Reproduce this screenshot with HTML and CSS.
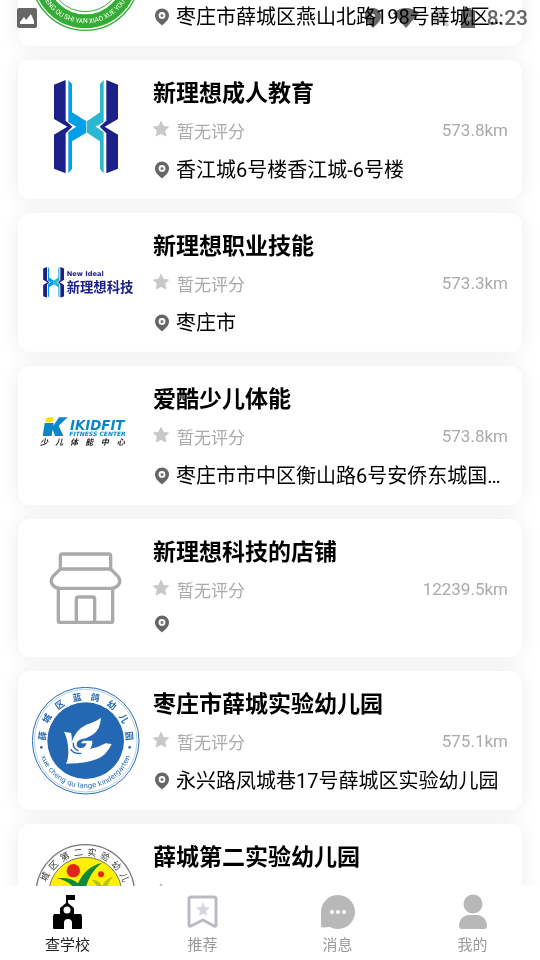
FILE: index.html
```html
<!DOCTYPE html>
<html lang="zh">
<head>
  <meta charset="utf-8">
  <meta name="viewport" content="width=device-width, initial-scale=1">
  <title>查学校</title>
  <link rel="stylesheet" href="styles.css">
</head>
<body>
  <svg class="sprite" aria-hidden="true">
    <symbol id="pin" viewBox="0 0 14 17">
      <path fill="#666" fill-rule="evenodd" d="M7 0a7 7 0 0 1 7 7c0 4-3.500 7-7 10C3.500 14 0 11 0 7a7 7 0 0 1 7-7zm0 3.500a3.400 3.400 0 1 0 0 6.800 3.400 3.400 0 0 0 0-6.800z"/>
      <circle cx="7" cy="6.900" r="1.500" fill="#777"/>
    </symbol>
    <symbol id="star" viewBox="0 0 16 16">
      <path fill="#c8c8c8" stroke="#c8c8c8" stroke-linejoin="round" d="M8 .5l2.300 4.800 5.200.7-3.800 3.600 1 5.300L8 12.400l-4.700 2.500 1-5.300L.5 6l5.200-.7z"/>
    </symbol>
    <symbol id="ideal" viewBox="108 58 192 280">
      <path fill="#1d2088" d="M108 72l35-14v122l20 18-20 20v120l-35-14V222l40-24-40-23zM300 72l-35-14v122l-20 18 20 20v120l35-14V222l-40-24 40-23z"/>
      <path fill="#00a0e9" d="M151 58l11 12v85l43 27v34l-43 26v83l-11 13V214l24-16-24-14z"/>
      <path fill="#2ab7cf" d="M257 58l-11 12v85l-39 27v34l39 26v83l11 13V214l-24-16 24-14z"/>
    </symbol>
  </svg>

  <div class="app">
    <div class="status">
      <svg class="status-photo" viewBox="0 0 20 20"><rect width="20" height="20" rx="2" fill="#666"/><path fill="#fff" d="M3 16v-2l4-5 2 3 5-6 3 7v3z"/></svg>
      <span class="status-right">
        <svg width="16" height="22" viewBox="0 0 16 22"><path fill="#666" fill-rule="evenodd" d="M8 1a8 8 0 0 1 8 8c0 5-4 8-8 12C4 17 0 14 0 9a8 8 0 0 1 8-8zm0 6a2 2 0 1 0 0 4 2 2 0 0 0 0-4z"/></svg>
        <svg width="26" height="20" viewBox="0 0 26 20"><path fill="#666" d="M0 5Q13-5 26 5L13 20z"/></svg>
        <svg width="18" height="20" viewBox="0 0 18 20"><path fill="#ccc" d="M6 0h9v12l3 5-2 2-4-4H0V6z"/></svg>
        <svg width="14" height="20" viewBox="0 0 14 20"><path fill="#666" d="M0 2h4V0h6v2h4v18H0z"/><path fill="#999" d="M8 4l-5 8h4l-1 5 5-8H7z"/></svg>
        <span class="time">8:23</span>
      </span>
    </div>

    <main class="list">
      <article class="card card-cut">
        <svg class="logo" viewBox="96 -232 324 324">
          <circle cx="256" cy="-72" r="162" fill="#fff" stroke="#35ac35" stroke-width="4"/>
          <circle cx="256" cy="-72" r="135" fill="none" stroke="#35ac35" stroke-width="42"/>
          <circle cx="256" cy="-72" r="106" fill="#fff" stroke="#35ac35" stroke-width="3"/>
          <path id="green-ring" fill="none" d="M115-72a141 141 0 0 0 282 0"/>
          <text class="ring-green"><textPath href="#green-ring" startOffset="50%">CHENG QU SHI YAN XIAO XUE YOU ER</textPath></text>
        </svg>
        <div class="info">
          <p class="address"><svg class="pin"><use href="#pin"/></svg><span>枣庄市薛城区燕山北路198号薛城区…</span></p>
        </div>
      </article>

      <article class="card">
        <svg class="logo" viewBox="42 46 324 324">
          <use href="#ideal" x="108" y="58" width="192" height="280"/>
        </svg>
        <div class="info">
          <h2 class="name">新理想成人教育</h2>
          <p class="meta"><svg class="star"><use href="#star"/></svg><span>暂无评分</span><span class="distance">573.8km</span></p>
          <p class="address"><svg class="pin"><use href="#pin"/></svg><span>香江城6号楼香江城-6号楼</span></p>
        </div>
      </article>

      <article class="card">
        <svg class="logo" viewBox="42 -35 324 324">
          <use href="#ideal" x="75" y="79" width="64" height="92"/>
          <text class="ideal-en" x="146" y="107">New Ideal</text>
          <text class="ideal-cn" x="146" y="154">新理想科技</text>
        </svg>
        <div class="info">
          <h2 class="name">新理想职业技能</h2>
          <p class="meta"><svg class="star"><use href="#star"/></svg><span>暂无评分</span><span class="distance">573.3km</span></p>
          <p class="address"><svg class="pin"><use href="#pin"/></svg><span>枣庄市</span></p>
        </div>
      </article>

      <article class="card">
        <svg class="logo" viewBox="42 -24 324 324">
          <path fill="#0b86c8" d="M80 99h27l-6 39H74zM123 82h26l-27 25 14 31h-25l-9-25z"/>
          <path fill="#ffe100" d="M88 82h14q6 0 4 8-2 7-9 7H82q1-12 6-15z"/>
          <text class="kid-name" x="156" y="121">IKIDFIT</text>
          <text class="kid-sub" x="154" y="138">FITNESS CENTER</text>
          <text class="kid-cn" y="166"><tspan x="66">少</tspan><tspan x="112">儿</tspan><tspan x="156">体</tspan><tspan x="202">能</tspan><tspan x="248">中</tspan><tspan x="296">心</tspan></text>
        </svg>
        <div class="info">
          <h2 class="name">爱酷少儿体能</h2>
          <p class="meta"><svg class="star"><use href="#star"/></svg><span>暂无评分</span><span class="distance">573.8km</span></p>
          <p class="address"><svg class="pin"><use href="#pin"/></svg><span>枣庄市市中区衡山路6号安侨东城国…</span></p>
        </div>
      </article>

      <article class="card">
        <svg class="logo" viewBox="42 13 324 324">
          <g fill="none" stroke="#aaa" stroke-width="10" stroke-linejoin="round">
            <path d="M127 115V76q0-6 6-6h139q6 0 6 6v39M127 115h151l22 22q11 15 0 27-8 9-22 9H127q-14 0-22-9-11-12 0-27z"/>
            <path d="M121 173v97q0 5 5 5h153q5 0 5-5v-97M175 275v-70q0-6 6-6h43q6 0 6 6v70"/>
          </g>
        </svg>
        <div class="info">
          <h2 class="name">新理想科技的店铺</h2>
          <p class="meta"><svg class="star"><use href="#star"/></svg><span>暂无评分</span><span class="distance">12239.5km</span></p>
          <p class="address address-empty"><svg class="pin"><use href="#pin"/></svg></p>
        </div>
      </article>

      <article class="card">
        <svg class="logo" viewBox="42 46 324 324">
          <circle cx="203" cy="207" r="160" fill="#fff" stroke="#2b6cb5" stroke-width="3"/>
          <circle cx="203" cy="207" r="154" fill="none" stroke="#2b6cb5"/>
          <circle cx="203" cy="207" r="115" fill="#2468b4"/>
          <path fill="#fff" d="M138 180q12 3 21 3 4 15 2 29 12-38 44-53 32-11 44-21-2 36-25 51-15 10-34 14-12 4-14 13-1 11 10 13 15 2 20-14h-18l8-8h27q0 18-8 25 25-4 48-17l18 2q-16 35-44 45-34 14-93 14 8-16 7-39-1-34-13-57z"/>
          <path fill="none" stroke="#2468b4" stroke-width="4" d="M158 232q8 16 32 13M166 213q-2 18 16 25"/>
          <circle cx="70" cy="227" r="4" fill="#2468b4"/>
          <circle cx="335" cy="227" r="4" fill="#2468b4"/>
          <path id="blue-bottom" fill="none" d="M61 207a142 142 0 0 0 284 0"/>
          <g class="ring-blue-cn">
            <text transform="translate(74 193) rotate(-84)">薛</text>
            <text transform="translate(88 141) rotate(-59)">城</text>
            <text transform="translate(126 100) rotate(-36)">区</text>
            <text transform="translate(177 78) rotate(-11)">蓝</text>
            <text transform="translate(231 78) rotate(12)">鸽</text>
            <text transform="translate(281 101) rotate(37)">幼</text>
            <text transform="translate(317 141) rotate(60)">儿</text>
            <text transform="translate(333 193) rotate(84)">园</text>
          </g>
          <text class="ring-blue"><textPath href="#blue-bottom" startOffset="50%">xue cheng qu lange kindergarten</textPath></text>
        </svg>
        <div class="info">
          <h2 class="name">枣庄市薛城实验幼儿园</h2>
          <p class="meta"><svg class="star"><use href="#star"/></svg><span>暂无评分</span><span class="distance">575.1km</span></p>
          <p class="address"><svg class="pin"><use href="#pin"/></svg><span>永兴路凤城巷17号薛城区实验幼儿园</span></p>
        </div>
      </article>

      <article class="card">
        <svg class="logo" viewBox="42 58 324 324">
          <circle cx="202" cy="220" r="148" fill="#fff" stroke="#777" stroke-width="4"/>
          <circle cx="202" cy="220" r="110" fill="#fff100" stroke="#777" stroke-width="3"/>
          <circle cx="166" cy="150" r="20" fill="#e1251b"/>
          <circle cx="249" cy="161" r="9" fill="#e1251b"/>
          <path fill="#b5c51c" d="M222 177q24 1 30 20 12-26 33-29-21 22-25 60h-18q2-29-20-51z"/>
          <path fill="#0b8a37" d="M116 173q42-5 64 15 23-50 71-61-46 36-52 100h-18q-12-43-65-54z"/>
          <g class="ring-black">
            <text transform="translate(82 168) rotate(-64)">城</text>
            <text transform="translate(107 134) rotate(-46)">区</text>
            <text transform="translate(141 108) rotate(-27)">第</text>
            <text transform="translate(181 96) rotate(-8)">二</text>
            <text transform="translate(222 96) rotate(9)">实</text>
            <text transform="translate(261 109) rotate(28)">验</text>
            <text transform="translate(295 135) rotate(47)">幼</text>
            <text transform="translate(319 170) rotate(66)">儿</text>
          </g>
        </svg>
        <div class="info">
          <h2 class="name">薛城第二实验幼儿园</h2>
          <p class="meta"><svg class="star"><use href="#star"/></svg></p>
        </div>
      </article>
    </main>

    <nav class="tabs">
      <a class="tab tab-on" href="#school">
        <svg viewBox="0 0 36 36"><path fill-rule="evenodd" d="M16 1h9v5h-7v3l6 5v6h7l1 2v12q0 1-1 1h-9v-6a4 4 0 0 0-8 0v6H4q-1 0-1-1V22l1-2h6v-6l6-5zm1 11.500a3.500 3.500 0 1 0 0 7 3.500 3.500 0 0 0 0-7z"/></svg>
        查学校
      </a>
      <a class="tab" href="#recommend">
        <svg viewBox="0 0 36 36"><path fill="none" stroke="#b9bac3" stroke-width="3" stroke-linejoin="round" d="M6 3h23q2 0 2 2v26q0 2-2 1l-11-6-12 6q-2 1-2-1V5q0-2 2-2z"/><path fill="#d5d5df" d="M18 8l2 5 5 .5-4 3.500 1 5-4-2.500-4 2.500 1-5-4-3.500 5-.5z"/></svg>
        推荐
      </a>
      <a class="tab" href="#message">
        <svg viewBox="0 0 36 36"><path fill="#b8b8b8" d="M18 1a17 17 0 1 1-8 32l-7 .5q-2 0-2-2V18A17 17 0 0 1 18 1z"/><g fill="#fff"><circle cx="12" cy="18" r="2"/><circle cx="18" cy="18" r="2"/><circle cx="24" cy="18" r="2"/></g></svg>
        消息
      </a>
      <a class="tab" href="#mine">
        <svg viewBox="0 0 36 36"><circle cx="18" cy="10" r="9.500" fill="#b8b8b8"/><path fill="#b8b8b8" d="M14 21h8c6 0 10 5 10 11 0 2-1 3-3 3H7c-2 0-3-1-3-3 0-6 4-11 10-11z"/></svg>
        我的
      </a>
    </nav>
  </div>
</body>
</html>
```

FILE: styles.css
```css
* {
  box-sizing: border-box;
}

body {
  margin: 0;
  background: #fff;
  color: #000;
  font-family: Roboto, "Noto Sans CJK SC", sans-serif;
}

.sprite {
  display: none;
}

.app {
  position: relative;
  display: flex;
  flex-direction: column;
  height: 100vh;
  overflow: hidden;
}

/* see-through system bar, lies over the list */
.status {
  position: absolute;
  top: 0;
  left: 0;
  right: 0;
  z-index: 1;
  display: flex;
  align-items: center;
  justify-content: space-between;
  height: 36px;
  padding: 0 12px 0 17px;
  mix-blend-mode: multiply;
}

.status-photo {
  width: 20px;
  height: 20px;
}

.status-right {
  display: flex;
  align-items: center;
  gap: 12px;
}

.time {
  color: #666;
  font-size: 21px;
  font-weight: 500;
}

/* list, scrolled down a little */
.list {
  flex: 1;
  min-height: 0;
  display: flex;
  flex-direction: column;
  gap: 14px;
  margin-top: -93px;
  padding: 0 18px;
  overflow: hidden;
}

.card {
  flex: none;
  display: flex;
  align-items: center;
  gap: 13px;
  min-height: 138px;
  padding: 15px 14px 14px;
  border-radius: 12px;
  background: #fff;
  box-shadow: 0 0 20px rgba(0, 0, 0, 0.08);
}

.card-cut {
  min-height: 139px;
}

.card-cut .info {
  align-self: flex-end;
}

.logo {
  flex: none;
  width: 108px;
  height: 108px;
}

.info {
  flex: 1;
  min-width: 0;
  align-self: flex-start;
  display: flex;
  flex-direction: column;
  gap: 10px;
  padding-top: 4px;
}

.name,
.meta,
.address {
  margin: 0;
  white-space: nowrap;
}

.name {
  font-size: 23px;
  line-height: 30px;
}

.meta {
  display: flex;
  align-items: center;
  gap: 8px;
  color: #aaa;
  font-size: 17px;
  line-height: 26px;
}

.distance {
  align-self: flex-start;
  margin-left: auto;
  line-height: 22px;
}

.star {
  width: 16px;
  height: 16px;
  margin-bottom: 6px;
}

.address {
  display: flex;
  align-items: center;
  gap: 7px;
  padding-left: 2px;
  font-size: 20px;
  line-height: 30px;
}

.address-empty {
  min-height: 20px;
}

.pin {
  flex: none;
  width: 14px;
  height: 18px;
}

/* bottom tabs */
.tabs {
  position: relative;
  display: flex;
  height: 74px;
  background: #fff;
}

.tab {
  flex: 1;
  display: flex;
  flex-direction: column;
  align-items: center;
  gap: 4px;
  padding-top: 8px;
  color: #999;
  font-size: 15px;
  line-height: 22px;
  text-decoration: none;
}

.tab svg {
  width: 36px;
  height: 36px;
}

.tab-on {
  color: #222;
}

/* lettering inside the school logos */
.ring-green {
  fill: #fff;
  font-size: 20px;
  text-anchor: middle;
}

.ring-blue {
  fill: #2468b4;
  font-family: "DejaVu Sans", sans-serif;
  font-size: 21px;
  text-anchor: middle;
}

.ring-blue-cn {
  fill: #2468b4;
  font-size: 27px;
  font-weight: 700;
  text-anchor: middle;
  dominant-baseline: central;
}

.ring-black {
  fill: #333;
  font-size: 27px;
  text-anchor: middle;
  dominant-baseline: central;
}

.ideal-en {
  fill: #1d2088;
  font-family: "DejaVu Sans", sans-serif;
  font-size: 20px;
  font-weight: 700;
}

.ideal-cn {
  fill: #1d2088;
  font-size: 40px;
  font-weight: 700;
}

.kid-name {
  fill: #0b86c8;
  font-family: "DejaVu Sans", sans-serif;
  font-size: 40px;
  font-style: italic;
  font-weight: 700;
}

.kid-sub {
  fill: #0b86c8;
  font-family: "DejaVu Sans", sans-serif;
  font-size: 18px;
  font-style: italic;
  font-weight: 700;
}

.kid-cn {
  fill: #222;
  font-size: 24px;
  font-style: italic;
  font-weight: 700;
}
```
